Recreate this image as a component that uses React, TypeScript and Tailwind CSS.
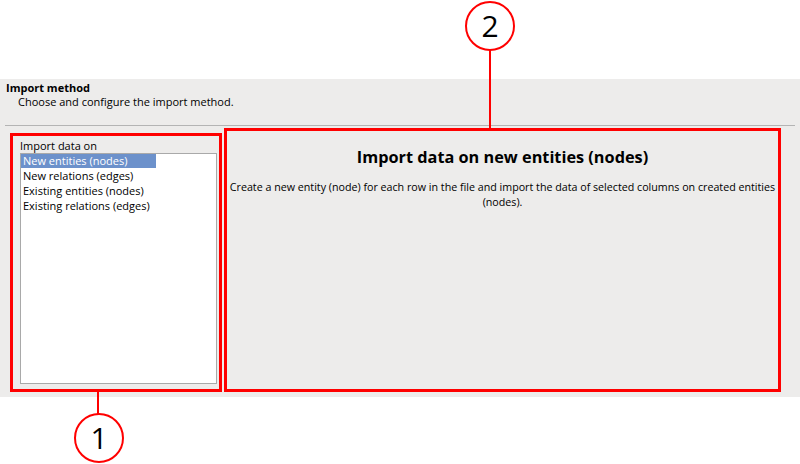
const items = [
  "New entities (nodes)",
  "New relations (edges)",
  "Existing entities (nodes)",
  "Existing relations (edges)",
];

function Callout({ n, className }: { n: string; className: string }) {
  return (
    <div
      className={
        "absolute flex h-[50px] w-[50px] items-center justify-center rounded-full border-2 border-[#ff0000] bg-white text-[30px] leading-none text-black " +
        className
      }
    >
      {n}
    </div>
  );
}

export default function App() {
  return (
    <div className="relative h-[464px] w-[800px] overflow-hidden bg-white font-['Open_Sans',sans-serif] text-[11px] text-black">
      <div className="h-[79px]" />
      <div className="flex h-[318px] flex-col bg-[#edeceb]">
        <div className="pl-[6px] pt-[2px]">
          <div className="text-[11px] font-bold leading-[14px]">Import method</div>
          <div className="pl-[12px] leading-[14px]">Choose and configure the import method.</div>
        </div>
        <div className="mx-[5px] mt-[16px] h-px bg-[#b4b4b4]" />
        <div className="flex gap-[2px] pl-[10px] pt-[2px]">
          <div className="mt-[5px] flex h-[259px] w-[212px] flex-col border-[3px] border-[#ff0000] pb-[5px] pl-[7px] pr-[2px] pt-[3px]">
            <div className="leading-[14px]">Import data on</div>
            <div className="flex-1 border border-[#a9a9a9] bg-white">
              {items.map((t, i) => (
                <div
                  key={t}
                  className={
                    i === 0
                      ? "w-[135px] bg-[#6c91cb] pl-[2px] leading-[14px] text-white"
                      : "pl-[2px] leading-[15px]"
                  }
                >
                  {t}
                </div>
              ))}
            </div>
          </div>
          <div className="h-[264px] w-[557px] border-[3px] border-[#ff0000] text-center">
            <div className="pt-[16px] text-[16.3px] font-bold leading-[20px]">
              Import data on new entities (nodes)
            </div>
            <div className="mt-[13px] text-[10.7px] leading-[15px]">
              Create a new entity (node) for each row in the file and import the data of selected columns on created entities (nodes).
            </div>
          </div>
        </div>
      </div>

      <div className="absolute left-[489px] top-[50px] h-[78px] w-[2px] bg-[#ff0000]" />
      <Callout n="2" className="left-[465px] top-[1px]" />
      <div className="absolute left-[97px] top-[392px] h-[22px] w-[2px] bg-[#ff0000]" />
      <Callout n="1" className="left-[74px] top-[413px]" />
    </div>
  );
}
